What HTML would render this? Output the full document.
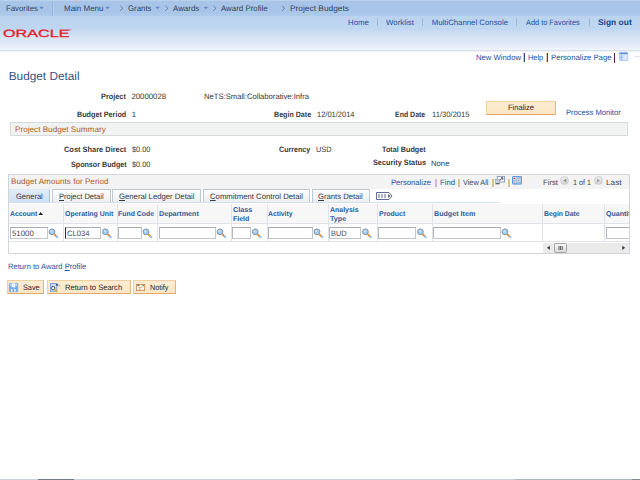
<!DOCTYPE html>
<html>
<head>
<meta charset="utf-8">
<title>Budget Detail</title>
<style>
html,body{margin:0;padding:0;}
body{text-rendering:geometricPrecision;width:640px;height:480px;overflow:hidden;background:#fff;position:relative;font-family:"Liberation Sans",Arial,sans-serif;font-size:7.6px;color:#333;}
.a{position:absolute;white-space:nowrap;transform-origin:0 0;}
.p{position:absolute;box-sizing:border-box;}
.b{font-weight:bold;color:#3a3a3a;}
.v{color:#383838;}
.g{color:#3f4658;}
.lnk{color:#1c50a0;}
.nav{color:#2f4161;}
.hl{color:#1d4f9a;}
.so{font-weight:bold;color:#1a4488;}
.ttl{color:#34527f;}
.gh{color:#b05c18;}
.tt{color:#343a44;}
.th{font-weight:bold;color:#2d5a99;}
.it{color:#4a4a4a;}
.bt{color:#262626;}
.inp{position:absolute;box-sizing:border-box;height:12px;top:227px;border:1px solid #c2c5ca;border-top-color:#a8acb2;border-left-color:#b4b8bd;background:#fff;}
.tab{position:absolute;box-sizing:border-box;top:189px;height:14px;border:1px solid #c1c7d1;border-bottom:none;background:linear-gradient(#fdfdfd,#f6f6f6 40%,#ededed);}
.vl{position:absolute;top:204px;height:38px;width:1px;background:#dfe2e7;}
.btn{position:absolute;box-sizing:border-box;border:1px solid #e6bb86;border-top-color:#efd0a4;border-left-color:#efd0a4;border-bottom-color:#e0aa6c;border-right-color:#e3b47c;background:linear-gradient(#fcecd0,#fae6c4);}
.sep{position:absolute;width:1px;}
svg{position:absolute;overflow:visible;}
</style>
</head>
<body>
<!-- top bars -->
<div class="p" style="left:0;top:0;width:640px;height:16px;background:linear-gradient(#c2d6ef 0,#a8c5e8 1.5px,#a8c5e8 12px,#afcaeb 100%);"></div>
<div class="p" style="left:0;top:16px;width:640px;height:35px;background:linear-gradient(#bcd3ef 0%,#bfd6f1 36%,#d7e4f5 62%,#dfe9f7 80%,#ebf1fa 94%,#f0f4fb 100%);border-bottom:1px solid #d7dfe8;"></div>
<div class="p" style="left:0;top:51px;width:640px;height:1px;background:#f2f3f5;"></div>
<div class="sep" style="left:52px;top:1px;height:15px;background:#94b3db;"></div><div class="sep" style="left:53px;top:1px;height:15px;background:#bbd1ee;"></div>

<!-- nav arrows -->
<svg style="left:0;top:0;" width="640" height="16" viewBox="0 0 640 16">
 <g fill="#5f89c5">
  <path d="M39.3 6.8h4.6l-2.3 2.5z"/>
  <path d="M105.3 6.8h4.6l-2.3 2.5z"/>
  <path d="M155.3 6.8h4.6l-2.3 2.5z"/>
  <path d="M203.5 6.8h4.6l-2.3 2.5z"/>
 </g>
 <g fill="none" stroke="#5f7698" stroke-width="0.95">
  <path d="M120.4 6l2.4 2.3l-2.4 2.3"/>
  <path d="M165.4 6l2.4 2.3l-2.4 2.3"/>
  <path d="M213.4 6l2.4 2.3l-2.4 2.3"/>
  <path d="M282.2 6l2.4 2.3l-2.4 2.3"/>
 </g>
</svg>

<!-- logo -->
<div class="a" style="left:3px;top:27.7px;font-size:10.6px;line-height:13px;color:#e5202c;-webkit-text-stroke:0.3px #e5202c;transform-origin:0 0;transform:scaleX(1.52);letter-spacing:0.05px;">ORACLE</div>
<div class="a" style="left:69px;top:28px;font-size:3px;line-height:4px;color:#e5202c;">®</div>

<!-- header separators -->
<div class="sep" style="left:377px;top:18px;height:8px;background:#9fb6d4;"></div>
<div class="sep" style="left:422px;top:18px;height:8px;background:#9fb6d4;"></div>
<div class="sep" style="left:516px;top:18px;height:8px;background:#9fb6d4;"></div>
<div class="sep" style="left:589px;top:18px;height:8px;background:#9fb6d4;"></div>

<!-- page link separators + icon -->
<div class="sep" style="left:523px;top:53px;height:9px;background:#e3c4a2;"></div><div class="sep" style="left:524px;top:53px;height:9px;background:#3b4878;"></div>
<div class="sep" style="left:546px;top:53px;height:9px;background:#e3c4a2;"></div><div class="sep" style="left:547px;top:53px;height:9px;background:#3b4878;"></div>
<div class="sep" style="left:614px;top:53px;height:10px;background:#5c2054;"></div>
<svg style="left:618.7px;top:52.3px;" width="9.2" height="8.8" viewBox="0 0 9.2 8.8">
 <rect x="0.4" y="0.4" width="8.4" height="8" rx="0.6" fill="#c9dbf6" stroke="#a3bff0" stroke-width="0.8"/>
 <rect x="0.6" y="0.7" width="8" height="1.3" fill="#5f8ce2"/>
 <rect x="3.4" y="3" width="4.8" height="4.8" fill="#dce8fa"/>
 <path d="M2.8 2.6v5.6M0.8 5.4h2" stroke="#7fa3e6" stroke-width="0.7" fill="none"/>
</svg>
<div class="p" style="left:635px;top:56px;width:5px;height:1px;background:#e2e2e2;"></div>
<div class="p" style="left:635px;top:57px;width:1px;height:1px;background:#ebebeb;"></div>

<!-- finalize button -->
<div class="btn" style="left:486px;top:101px;width:70px;height:14px;"></div>

<!-- group box -->
<div class="p" style="left:10px;top:122px;width:618px;height:14px;background:#f1f3f3;border:1px solid #d5dada;"></div>

<!-- grid frame -->
<div class="p" style="left:8px;top:174px;width:622px;height:80px;border:1px solid #d2d6da;background:#fff;"></div>
<div class="p" style="left:9px;top:175px;width:620px;height:14px;background:#f3f3f3;"></div>
<!-- grid header separators -->
<div class="sep" style="left:435px;top:179px;height:8px;background:#e3bd8a;"></div><div class="sep" style="left:436px;top:179px;height:8px;background:#cbbfd0;"></div>
<div class="sep" style="left:458px;top:179px;height:8px;background:#e3bd8a;"></div><div class="sep" style="left:459px;top:179px;height:8px;background:#cbbfd0;"></div>
<div class="sep" style="left:492px;top:179px;height:8px;background:#e3bd8a;"></div><div class="sep" style="left:493px;top:179px;height:8px;background:#cbbfd0;"></div>
<div class="sep" style="left:508px;top:179px;height:8px;background:#e3bd8a;"></div><div class="sep" style="left:509px;top:179px;height:8px;background:#cbbfd0;"></div>
<!-- popup icon -->
<svg style="left:495px;top:176px;" width="10" height="9" viewBox="0 0 10 9">
 <rect x="2.3" y="0.4" width="7.3" height="5.6" fill="#fdfdfe" stroke="#8494b2" stroke-width="0.9"/>
 <rect x="0.5" y="3.4" width="4" height="4.6" fill="#c9cfd9" stroke="#9aa3b3" stroke-width="0.7"/>
 <path d="M1 7.6h3.4" stroke="#4a5264" stroke-width="0.9"/>
 <path d="M4.6 4.6l3-2.6M7.8 1.8v2M7.8 1.8h-2" stroke="#343c4c" stroke-width="0.9" fill="none"/>
</svg>
<!-- spreadsheet icon -->
<svg style="left:512px;top:176px;" width="10" height="9" viewBox="0 0 10 9">
 <rect x="0.5" y="0.5" width="9" height="7.6" rx="0.5" fill="#a9bfdc" stroke="#5f9be2" stroke-width="1"/>
 <path d="M1.2 3.6h7.6M1.2 5.6h7.6" stroke="#c4d6ee" stroke-width="0.8"/>
 <rect x="1.2" y="1" width="3" height="2.2" fill="#f2f5fa"/>
 <path d="M2.4 1l1 1.9h-2z" fill="#e0141e"/>
</svg>
<!-- nav circles -->
<div class="p" style="left:560.4px;top:175.9px;width:9px;height:9px;border-radius:50%;background:linear-gradient(#f3f3f3,#cfcfcf);border:0.7px solid #cdcdcd;"></div>
<div class="p" style="left:593.7px;top:175.9px;width:9px;height:9px;border-radius:50%;background:linear-gradient(#f3f3f3,#cfcfcf);border:0.7px solid #cdcdcd;"></div>
<svg style="left:560px;top:175px;" width="44" height="11" viewBox="0 0 44 11">
 <path d="M6.3 3.4v4l-3-2z" fill="#8e8e8e"/>
 <path d="M37 3.4v4l3-2z" fill="#a6a6a6"/>
</svg>

<!-- tabs -->
<div class="tab" style="left:9px;width:41px;background:linear-gradient(#e6eef9,#d9e6f6 30%,#cfdff3);border-color:#dbe6f5;border-right-color:#a6bbd9;"></div>
<div class="tab" style="left:52px;width:59px;"></div>
<div class="tab" style="left:112px;width:89px;"></div>
<div class="tab" style="left:203px;width:107px;"></div>
<div class="tab" style="left:312px;width:58px;"></div>
<div class="p" style="left:9px;top:202px;width:489px;height:1px;background:#d0def1;"></div>
<!-- show all columns icon -->
<svg style="left:376px;top:192px;" width="17" height="8" viewBox="0 0 17 8">
 <path d="M0.5 0.5h12.5l3 3.5l-3 3.5h-12.5z" fill="#fff" stroke="#4b5f86" stroke-width="0.9"/>
 <path d="M2 3h2M5 3h2M8 3h2M2 5h2M5 5h2M8 5h2" stroke="#4b5f86" stroke-width="0.9"/>
 <path d="M12.2 2v4l2.3-2z" fill="#4b5f86"/>
</svg>

<!-- column header row -->
<div class="p" style="left:9px;top:204px;width:620px;height:20px;background:#f7f7f8;border-bottom:1px solid #e0e3e7;"></div>
<div class="p" style="left:9px;top:241px;width:620px;height:1px;background:#e0e3e7;"></div>
<div class="vl" style="left:63px;"></div>
<div class="vl" style="left:117px;"></div>
<div class="vl" style="left:157px;"></div>
<div class="vl" style="left:231px;"></div>
<div class="vl" style="left:267px;"></div>
<div class="vl" style="left:328px;"></div>
<div class="vl" style="left:377px;"></div>
<div class="vl" style="left:432px;"></div>
<div class="vl" style="left:542px;"></div>
<div class="vl" style="left:604px;"></div>
<!-- sort arrow -->
<svg style="left:38px;top:211px;" width="6" height="5" viewBox="0 0 6 5"><path d="M0.4 4h4.6l-2.3-3z" fill="#222"/></svg>

<!-- inputs -->
<div class="inp" style="left:10px;width:38px;"></div>
<div class="inp" style="left:65px;width:36px;border-left-color:#333;"></div>
<div class="inp" style="left:118px;width:24px;"></div>
<div class="inp" style="left:159px;width:57px;"></div>
<div class="inp" style="left:232px;width:19px;"></div>
<div class="inp" style="left:268px;width:45px;"></div>
<div class="inp" style="left:329px;width:32px;"></div>
<div class="inp" style="left:378px;width:38px;"></div>
<div class="inp" style="left:433px;width:68px;"></div>
<div class="inp" style="left:606px;width:23px;border-right:none;"></div>

<!-- magnifiers -->
<svg style="left:0;top:0;" width="640" height="480" viewBox="0 0 640 480">
 <g transform="translate(48.6 228.5)"><path d="M5.6 5.6l2.6 2.6" stroke="#ea8f2c" stroke-width="2" stroke-linecap="butt" fill="none"/>
   <path d="M8 8l0.8 0.8" stroke="#9cbfe6" stroke-width="2" stroke-linecap="round" fill="none"/>
   <circle cx="3.4" cy="3.3" r="2.9" fill="#a3cff3" stroke="#7d8b9c" stroke-width="0.9"/>
   <circle cx="2.7" cy="2.6" r="0.9" fill="#d4eafb"/></g>
 <g transform="translate(102 228.5)"><path d="M5.6 5.6l2.6 2.6" stroke="#ea8f2c" stroke-width="2" stroke-linecap="butt" fill="none"/>
   <path d="M8 8l0.8 0.8" stroke="#9cbfe6" stroke-width="2" stroke-linecap="round" fill="none"/>
   <circle cx="3.4" cy="3.3" r="2.9" fill="#a3cff3" stroke="#7d8b9c" stroke-width="0.9"/>
   <circle cx="2.7" cy="2.6" r="0.9" fill="#d4eafb"/></g>
 <g transform="translate(142.6 228.5)"><path d="M5.6 5.6l2.6 2.6" stroke="#ea8f2c" stroke-width="2" stroke-linecap="butt" fill="none"/>
   <path d="M8 8l0.8 0.8" stroke="#9cbfe6" stroke-width="2" stroke-linecap="round" fill="none"/>
   <circle cx="3.4" cy="3.3" r="2.9" fill="#a3cff3" stroke="#7d8b9c" stroke-width="0.9"/>
   <circle cx="2.7" cy="2.6" r="0.9" fill="#d4eafb"/></g>
 <g transform="translate(216.6 228.5)"><path d="M5.6 5.6l2.6 2.6" stroke="#ea8f2c" stroke-width="2" stroke-linecap="butt" fill="none"/>
   <path d="M8 8l0.8 0.8" stroke="#9cbfe6" stroke-width="2" stroke-linecap="round" fill="none"/>
   <circle cx="3.4" cy="3.3" r="2.9" fill="#a3cff3" stroke="#7d8b9c" stroke-width="0.9"/>
   <circle cx="2.7" cy="2.6" r="0.9" fill="#d4eafb"/></g>
 <g transform="translate(251.8 228.5)"><path d="M5.6 5.6l2.6 2.6" stroke="#ea8f2c" stroke-width="2" stroke-linecap="butt" fill="none"/>
   <path d="M8 8l0.8 0.8" stroke="#9cbfe6" stroke-width="2" stroke-linecap="round" fill="none"/>
   <circle cx="3.4" cy="3.3" r="2.9" fill="#a3cff3" stroke="#7d8b9c" stroke-width="0.9"/>
   <circle cx="2.7" cy="2.6" r="0.9" fill="#d4eafb"/></g>
 <g transform="translate(313.6 228.5)"><path d="M5.6 5.6l2.6 2.6" stroke="#ea8f2c" stroke-width="2" stroke-linecap="butt" fill="none"/>
   <path d="M8 8l0.8 0.8" stroke="#9cbfe6" stroke-width="2" stroke-linecap="round" fill="none"/>
   <circle cx="3.4" cy="3.3" r="2.9" fill="#a3cff3" stroke="#7d8b9c" stroke-width="0.9"/>
   <circle cx="2.7" cy="2.6" r="0.9" fill="#d4eafb"/></g>
 <g transform="translate(362 228.5)"><path d="M5.6 5.6l2.6 2.6" stroke="#ea8f2c" stroke-width="2" stroke-linecap="butt" fill="none"/>
   <path d="M8 8l0.8 0.8" stroke="#9cbfe6" stroke-width="2" stroke-linecap="round" fill="none"/>
   <circle cx="3.4" cy="3.3" r="2.9" fill="#a3cff3" stroke="#7d8b9c" stroke-width="0.9"/>
   <circle cx="2.7" cy="2.6" r="0.9" fill="#d4eafb"/></g>
 <g transform="translate(417 228.5)"><path d="M5.6 5.6l2.6 2.6" stroke="#ea8f2c" stroke-width="2" stroke-linecap="butt" fill="none"/>
   <path d="M8 8l0.8 0.8" stroke="#9cbfe6" stroke-width="2" stroke-linecap="round" fill="none"/>
   <circle cx="3.4" cy="3.3" r="2.9" fill="#a3cff3" stroke="#7d8b9c" stroke-width="0.9"/>
   <circle cx="2.7" cy="2.6" r="0.9" fill="#d4eafb"/></g>
 <g transform="translate(501.6 228.5)"><path d="M5.6 5.6l2.6 2.6" stroke="#ea8f2c" stroke-width="2" stroke-linecap="butt" fill="none"/>
   <path d="M8 8l0.8 0.8" stroke="#9cbfe6" stroke-width="2" stroke-linecap="round" fill="none"/>
   <circle cx="3.4" cy="3.3" r="2.9" fill="#a3cff3" stroke="#7d8b9c" stroke-width="0.9"/>
   <circle cx="2.7" cy="2.6" r="0.9" fill="#d4eafb"/></g>
</svg>

<!-- scrollbar -->
<div class="p" style="left:543px;top:243px;width:86px;height:10px;background:#eaeaea;"></div>
<div class="p" style="left:554px;top:243px;width:13px;height:10px;background:linear-gradient(#f6f6f6,#dadada);border:1px solid #a3a3a3;border-radius:1.5px;"></div>
<svg style="left:543px;top:243px;" width="86" height="10" viewBox="0 0 86 10">
 <path d="M6.9 2.7v4.2l-2.9-2.1z" fill="#3c3c3c"/>
 <path d="M79.3 2.7v4.2l2.9-2.1z" fill="#3c3c3c"/>
 <path d="M16 3v4M17.6 3v4M19.2 3v4" stroke="#3a3a3a" stroke-width="0.8"/>
</svg>

<!-- buttons -->
<div class="btn" style="left:7px;top:280px;width:37px;height:14px;"></div>
<div class="btn" style="left:47px;top:280px;width:84px;height:14px;"></div>
<div class="btn" style="left:133px;top:280px;width:43px;height:14px;"></div>
<!-- save icon -->
<svg style="left:9.2px;top:283px;" width="9" height="9" viewBox="0 0 9 9">
 <rect x="0.3" y="0.3" width="8.4" height="8.4" rx="0.5" fill="#78abe8" stroke="#6b9ee0" stroke-width="0.6"/>
 <rect x="2.6" y="0.3" width="3.8" height="4" fill="#f2f7fd"/>
 <rect x="1.1" y="0.6" width="1" height="2.4" fill="#c5dcf6"/>
 <rect x="6.9" y="0.6" width="1" height="2.4" fill="#c5dcf6"/>
 <rect x="2" y="6" width="1.4" height="2.7" fill="#eef4fc"/>
 <rect x="5.2" y="6" width="1.4" height="2.7" fill="#eef4fc"/>
</svg>
<!-- return to search icon -->
<svg style="left:49.5px;top:283px;" width="11" height="9" viewBox="0 0 11 9">
 <rect x="0.4" y="0.6" width="6.4" height="7.6" fill="#c9ddf5" stroke="#5f94da" stroke-width="0.8"/>
 <circle cx="3.2" cy="5.1" r="1.7" fill="#e6f0fb" stroke="#41506e" stroke-width="0.9"/>
 <path d="M4.6 6.5l2.3 2" stroke="#c8a43a" stroke-width="1.2" stroke-linecap="round"/>
 <path d="M7 2.6c1.2-1.3 2.9-0.8 3.4 0.9" stroke="#8ea3c4" stroke-width="0.8" fill="none"/>
 <path d="M5.6 2.6h2.8l-1.4-2z" fill="#213a6c"/>
</svg>
<!-- notify icon -->
<svg style="left:135.8px;top:284px;" width="9" height="7" viewBox="0 0 9 7">
 <rect x="0.4" y="0.4" width="8.2" height="6.2" fill="#fbf3e6" stroke="#b98a5e" stroke-width="0.8"/>
 <rect x="1.2" y="0.6" width="2.2" height="1.1" fill="#6e3f1e"/>
 <path d="M2.6 3.4h3.2M2.6 5.2h2.4" stroke="#d59a68" stroke-width="0.9"/>
 <rect x="6.3" y="0.9" width="1.5" height="1.4" fill="#3aa646"/>
</svg>
<!-- bottom edge -->
<div class="p" style="left:0;top:479px;width:640px;height:1px;background:#c6d1e1;"></div>
<div class="p" style="left:38px;top:479px;width:36px;height:1px;background:#727d8c;"></div>
<div class="p" style="left:515px;top:479px;width:117px;height:1px;background:#aeb5bf;"></div>
<div class="p" style="left:632px;top:479px;width:8px;height:1px;background:#868b92;"></div>

<!-- text -->
<div class="a nav" style="left:5.50px;top:4.00px;font-size:8.1px;line-height:10px;transform:scaleX(0.9611);">Favorites</div>
<div class="a nav" style="left:63.75px;top:4.00px;font-size:8.1px;line-height:10px;transform:scaleX(0.9863);">Main Menu</div>
<div class="a nav" style="left:127.50px;top:4.00px;font-size:8.1px;line-height:10px;transform:scaleX(0.9672);">Grants</div>
<div class="a nav" style="left:173.00px;top:4.00px;font-size:8.1px;line-height:10px;transform:scaleX(0.9779);">Awards</div>
<div class="a nav" style="left:221.25px;top:4.00px;font-size:8.1px;line-height:10px;transform:scaleX(0.9740);">Award Profile</div>
<div class="a nav" style="left:289.50px;top:4.00px;font-size:8.1px;line-height:10px;transform:scaleX(1.0325);">Project Budgets</div>
<div class="a hl" style="left:347.50px;top:18.00px;font-size:7.8px;line-height:10px;transform:scaleX(1.0042);">Home</div>
<div class="a hl" style="left:386.30px;top:18.00px;font-size:7.8px;line-height:10px;transform:scaleX(1.0111);">Worklist</div>
<div class="a hl" style="left:431.70px;top:18.00px;font-size:7.8px;line-height:10px;">MultiChannel Console</div>
<div class="a hl" style="left:525.80px;top:18.00px;font-size:7.8px;line-height:10px;transform:scaleX(0.9457);">Add to Favorites</div>
<div class="a hl so" style="left:597.50px;top:17.00px;font-size:8.3px;line-height:10px;transform:scaleX(1.0154);">Sign out</div>
<div class="a lnk" style="left:475.50px;top:53.00px;font-size:7.8px;line-height:10px;transform:scaleX(0.9890);">New Window</div>
<div class="a lnk" style="left:528.30px;top:53.00px;font-size:7.8px;line-height:10px;transform:scaleX(0.9472);">Help</div>
<div class="a lnk" style="left:550.50px;top:53.00px;font-size:7.8px;line-height:10px;transform:scaleX(0.9898);">Personalize Page</div>
<div class="a ttl" style="left:8.75px;top:69.00px;font-size:11.8px;line-height:15px;">Budget Detail</div>
<div class="a b" style="left:101.25px;top:92.00px;font-size:7.8px;line-height:10px;transform:scaleX(0.9400);">Project</div>
<div class="a v" style="left:131.40px;top:92.00px;font-size:7.8px;line-height:10px;">20000028</div>
<div class="a v" style="left:203.75px;top:92.00px;font-size:7.8px;line-height:10px;transform:scaleX(0.9809);">NeTS:Small:Collaborative:Infra</div>
<div class="a b" style="left:76.90px;top:110.00px;font-size:7.8px;line-height:10px;transform:scaleX(0.9234);">Budget Period</div>
<div class="a v" style="left:131.80px;top:110.00px;font-size:7.8px;line-height:10px;">1</div>
<div class="a b" style="left:273.50px;top:110.00px;font-size:7.8px;line-height:10px;transform:scaleX(0.9108);">Begin Date</div>
<div class="a v" style="left:317.20px;top:110.00px;font-size:7.8px;line-height:10px;transform:scaleX(0.9608);">12/01/2014</div>
<div class="a b" style="left:395.40px;top:110.00px;font-size:7.8px;line-height:10px;transform:scaleX(0.8936);">End Date</div>
<div class="a v" style="left:432.10px;top:110.00px;font-size:7.8px;line-height:10px;transform:scaleX(0.9778);">11/30/2015</div>
<div class="a bt" style="left:508.00px;top:103.00px;font-size:7.8px;line-height:10px;transform:scaleX(0.9674);">Finalize</div>
<div class="a lnk" style="left:566.00px;top:108.00px;font-size:7.8px;line-height:10px;transform:scaleX(0.9708);">Process Monitor</div>
<div class="a gh" style="left:15.00px;top:125.00px;font-size:8.1px;line-height:10px;transform:scaleX(1.0087);">Project Budget Summary</div>
<div class="a b" style="left:63.75px;top:145.00px;font-size:7.8px;line-height:10px;transform:scaleX(0.9528);">Cost Share Direct</div>
<div class="a v" style="left:131.75px;top:145.00px;font-size:7.8px;line-height:10px;transform:scaleX(0.9351);">$0.00</div>
<div class="a b" style="left:279.40px;top:145.00px;font-size:7.8px;line-height:10px;transform:scaleX(0.9114);">Currency</div>
<div class="a v" style="left:316.25px;top:145.00px;font-size:7.8px;line-height:10px;transform:scaleX(0.9503);">USD</div>
<div class="a b" style="left:381.90px;top:145.00px;font-size:7.8px;line-height:10px;transform:scaleX(0.9282);">Total Budget</div>
<div class="a b" style="left:70.50px;top:160.00px;font-size:7.8px;line-height:10px;transform:scaleX(0.9169);">Sponsor Budget</div>
<div class="a v" style="left:131.75px;top:160.00px;font-size:7.8px;line-height:10px;transform:scaleX(0.9351);">$0.00</div>
<div class="a b" style="left:372.50px;top:158.00px;font-size:7.8px;line-height:10px;transform:scaleX(0.9354);">Security Status</div>
<div class="a v" style="left:431.25px;top:159.00px;font-size:7.8px;line-height:10px;transform:scaleX(0.9898);">None</div>
<div class="a gh" style="left:10.50px;top:177.00px;font-size:8.1px;line-height:10px;transform:scaleX(1.0079);">Budget Amounts for Period</div>
<div class="a lnk" style="left:391.25px;top:178.00px;font-size:7.8px;line-height:10px;transform:scaleX(0.9816);">Personalize</div>
<div class="a lnk" style="left:440.00px;top:178.00px;font-size:7.8px;line-height:10px;transform:scaleX(0.9887);">Find</div>
<div class="a g" style="left:462.50px;top:178.00px;font-size:7.8px;line-height:10px;transform:scaleX(0.9385);">View All</div>
<div class="a g" style="left:542.50px;top:178.00px;font-size:7.8px;line-height:10px;transform:scaleX(0.9897);">First</div>
<div class="a g" style="left:573.00px;top:178.00px;font-size:7.8px;line-height:10px;transform:scaleX(0.9223);">1 of 1</div>
<div class="a g" style="left:606.25px;top:178.00px;font-size:7.8px;line-height:10px;transform:scaleX(1.0542);">Last</div>
<div class="a tt" style="left:16.00px;top:192.00px;font-size:7.8px;line-height:10px;transform:scaleX(0.9640);">General</div>
<div class="a tt" style="left:58.50px;top:192.00px;font-size:7.8px;line-height:10px;transform:scaleX(0.9617);"><u>P</u>roject Detail</div>
<div class="a tt" style="left:118.75px;top:192.00px;font-size:7.8px;line-height:10px;transform:scaleX(0.9896);"><u>G</u>eneral Ledger Detail</div>
<div class="a tt" style="left:209.50px;top:192.00px;font-size:7.8px;line-height:10px;transform:scaleX(0.9935);"><u>C</u>ommitment Control Detail</div>
<div class="a tt" style="left:318.25px;top:192.00px;font-size:7.8px;line-height:10px;transform:scaleX(0.9832);"><u>G</u>rants Detail</div>
<div class="a th" style="left:10.30px;top:210.00px;font-size:7.0px;line-height:9px;transform:scaleX(0.9714);">Account</div>
<div class="a th" style="left:65.40px;top:210.00px;font-size:7.0px;line-height:9px;transform:scaleX(0.9933);">Operating Unit</div>
<div class="a th" style="left:118.40px;top:210.00px;font-size:7.0px;line-height:9px;transform:scaleX(0.9901);">Fund Code</div>
<div class="a th" style="left:159.10px;top:210.00px;font-size:7.0px;line-height:9px;transform:scaleX(1.0255);">Department</div>
<div class="a th" style="left:232.75px;top:206.00px;font-size:7.0px;line-height:9px;transform:scaleX(1.0301);">Class</div>
<div class="a th" style="left:232.75px;top:215.00px;font-size:7.0px;line-height:9px;transform:scaleX(0.9943);">Field</div>
<div class="a th" style="left:268.40px;top:210.00px;font-size:7.0px;line-height:9px;transform:scaleX(0.9645);">Activity</div>
<div class="a th" style="left:329.75px;top:206.00px;font-size:7.0px;line-height:9px;transform:scaleX(0.9949);">Analysis</div>
<div class="a th" style="left:329.75px;top:215.00px;font-size:7.0px;line-height:9px;transform:scaleX(1.0267);">Type</div>
<div class="a th" style="left:378.70px;top:210.00px;font-size:7.0px;line-height:9px;transform:scaleX(0.9942);">Product</div>
<div class="a th" style="left:433.50px;top:210.00px;font-size:7.0px;line-height:9px;transform:scaleX(1.0197);">Budget Item</div>
<div class="a th" style="left:544.00px;top:210.00px;font-size:7.0px;line-height:9px;transform:scaleX(0.9737);">Begin Date</div>
<div class="a th" style="left:605.90px;top:210.00px;font-size:7.0px;line-height:9px;transform:scaleX(1.0074);width:23.2px;overflow:hidden;">Quantity</div>
<div class="a it" style="left:11.60px;top:229.00px;font-size:7.8px;line-height:10px;transform:scaleX(1.0052);">51000</div>
<div class="a it" style="left:67.00px;top:229.00px;font-size:7.8px;line-height:10px;transform:scaleX(0.9789);">CL034</div>
<div class="a it" style="left:331.00px;top:229.00px;font-size:7.8px;line-height:10px;transform:scaleX(0.9412);">BUD</div>
<div class="a lnk" style="left:8.00px;top:262.00px;font-size:7.8px;line-height:10px;transform:scaleX(0.9776);">Return to Award <u>P</u>rofile</div>
<div class="a bt" style="left:22.75px;top:283.00px;font-size:7.8px;line-height:10px;transform:scaleX(0.9364);">Save</div>
<div class="a bt" style="left:65.00px;top:283.00px;font-size:7.8px;line-height:10px;transform:scaleX(0.9686);">Return to Search</div>
<div class="a bt" style="left:150.00px;top:283.00px;font-size:7.8px;line-height:10px;transform:scaleX(0.9229);">Notify</div>
</body>
</html>
